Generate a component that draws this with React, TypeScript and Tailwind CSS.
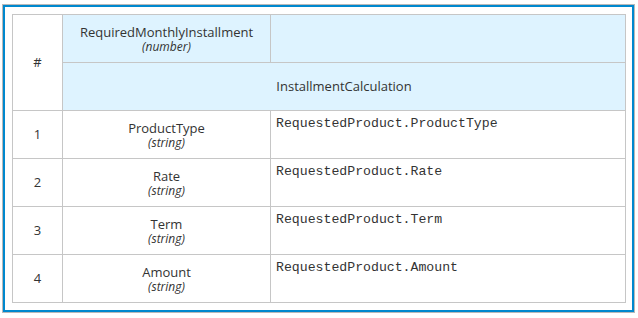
const rows = [
  { n: 1, name: "ProductType", type: "string", expr: "RequestedProduct.ProductType" },
  { n: 2, name: "Rate", type: "string", expr: "RequestedProduct.Rate" },
  { n: 3, name: "Term", type: "string", expr: "RequestedProduct.Term" },
  { n: 4, name: "Amount", type: "string", expr: "RequestedProduct.Amount" },
];

const NameCell = ({ name, type }: { name: string; type: string }) => (
  <div className="bg-white flex flex-col items-center justify-center">
    <span className="text-[13px] leading-4">{name}</span>
    <span className="text-xs leading-[14px] italic">({type})</span>
  </div>
);

export default function App() {
  return (
    <div className="pl-[2px] pt-[4px] bg-white min-h-screen text-[#333] font-['Open_Sans',sans-serif]">
      <div className="w-[633px] h-[309px] border border-[#b9b9b9]">
        <div className="h-full border-2 border-[#0088ce] pl-[7px] pt-[7px]">
          <div className="w-[614px] grid grid-cols-[49px_207px_354px] grid-rows-[47px_47px_47px_47px_47px_47px] gap-px p-px bg-[#c6c6c6]">
            <div className="row-span-2 bg-white flex items-center justify-center text-[13px]">#</div>
            <div className="bg-[#def3ff] flex flex-col items-center justify-center">
              <span className="text-[13px] leading-4">RequiredMonthlyInstallment</span>
              <span className="text-xs leading-[14px] italic">(number)</span>
            </div>
            <div className="bg-[#def3ff]" />
            <div className="col-span-2 bg-[#def3ff] flex items-center justify-center text-[13px]">
              InstallmentCalculation
            </div>
            {rows.map((r) => (
              <div key={r.n} className="contents">
                <div className="bg-white flex items-center justify-center text-[13px]">{r.n}</div>
                <NameCell name={r.name} type={r.type} />
                <div className="bg-white pl-[5px] pt-[5px] font-['Liberation_Mono',monospace] text-[13.2px] leading-4">
                  {r.expr}
                </div>
              </div>
            ))}
          </div>
        </div>
      </div>
    </div>
  );
}
